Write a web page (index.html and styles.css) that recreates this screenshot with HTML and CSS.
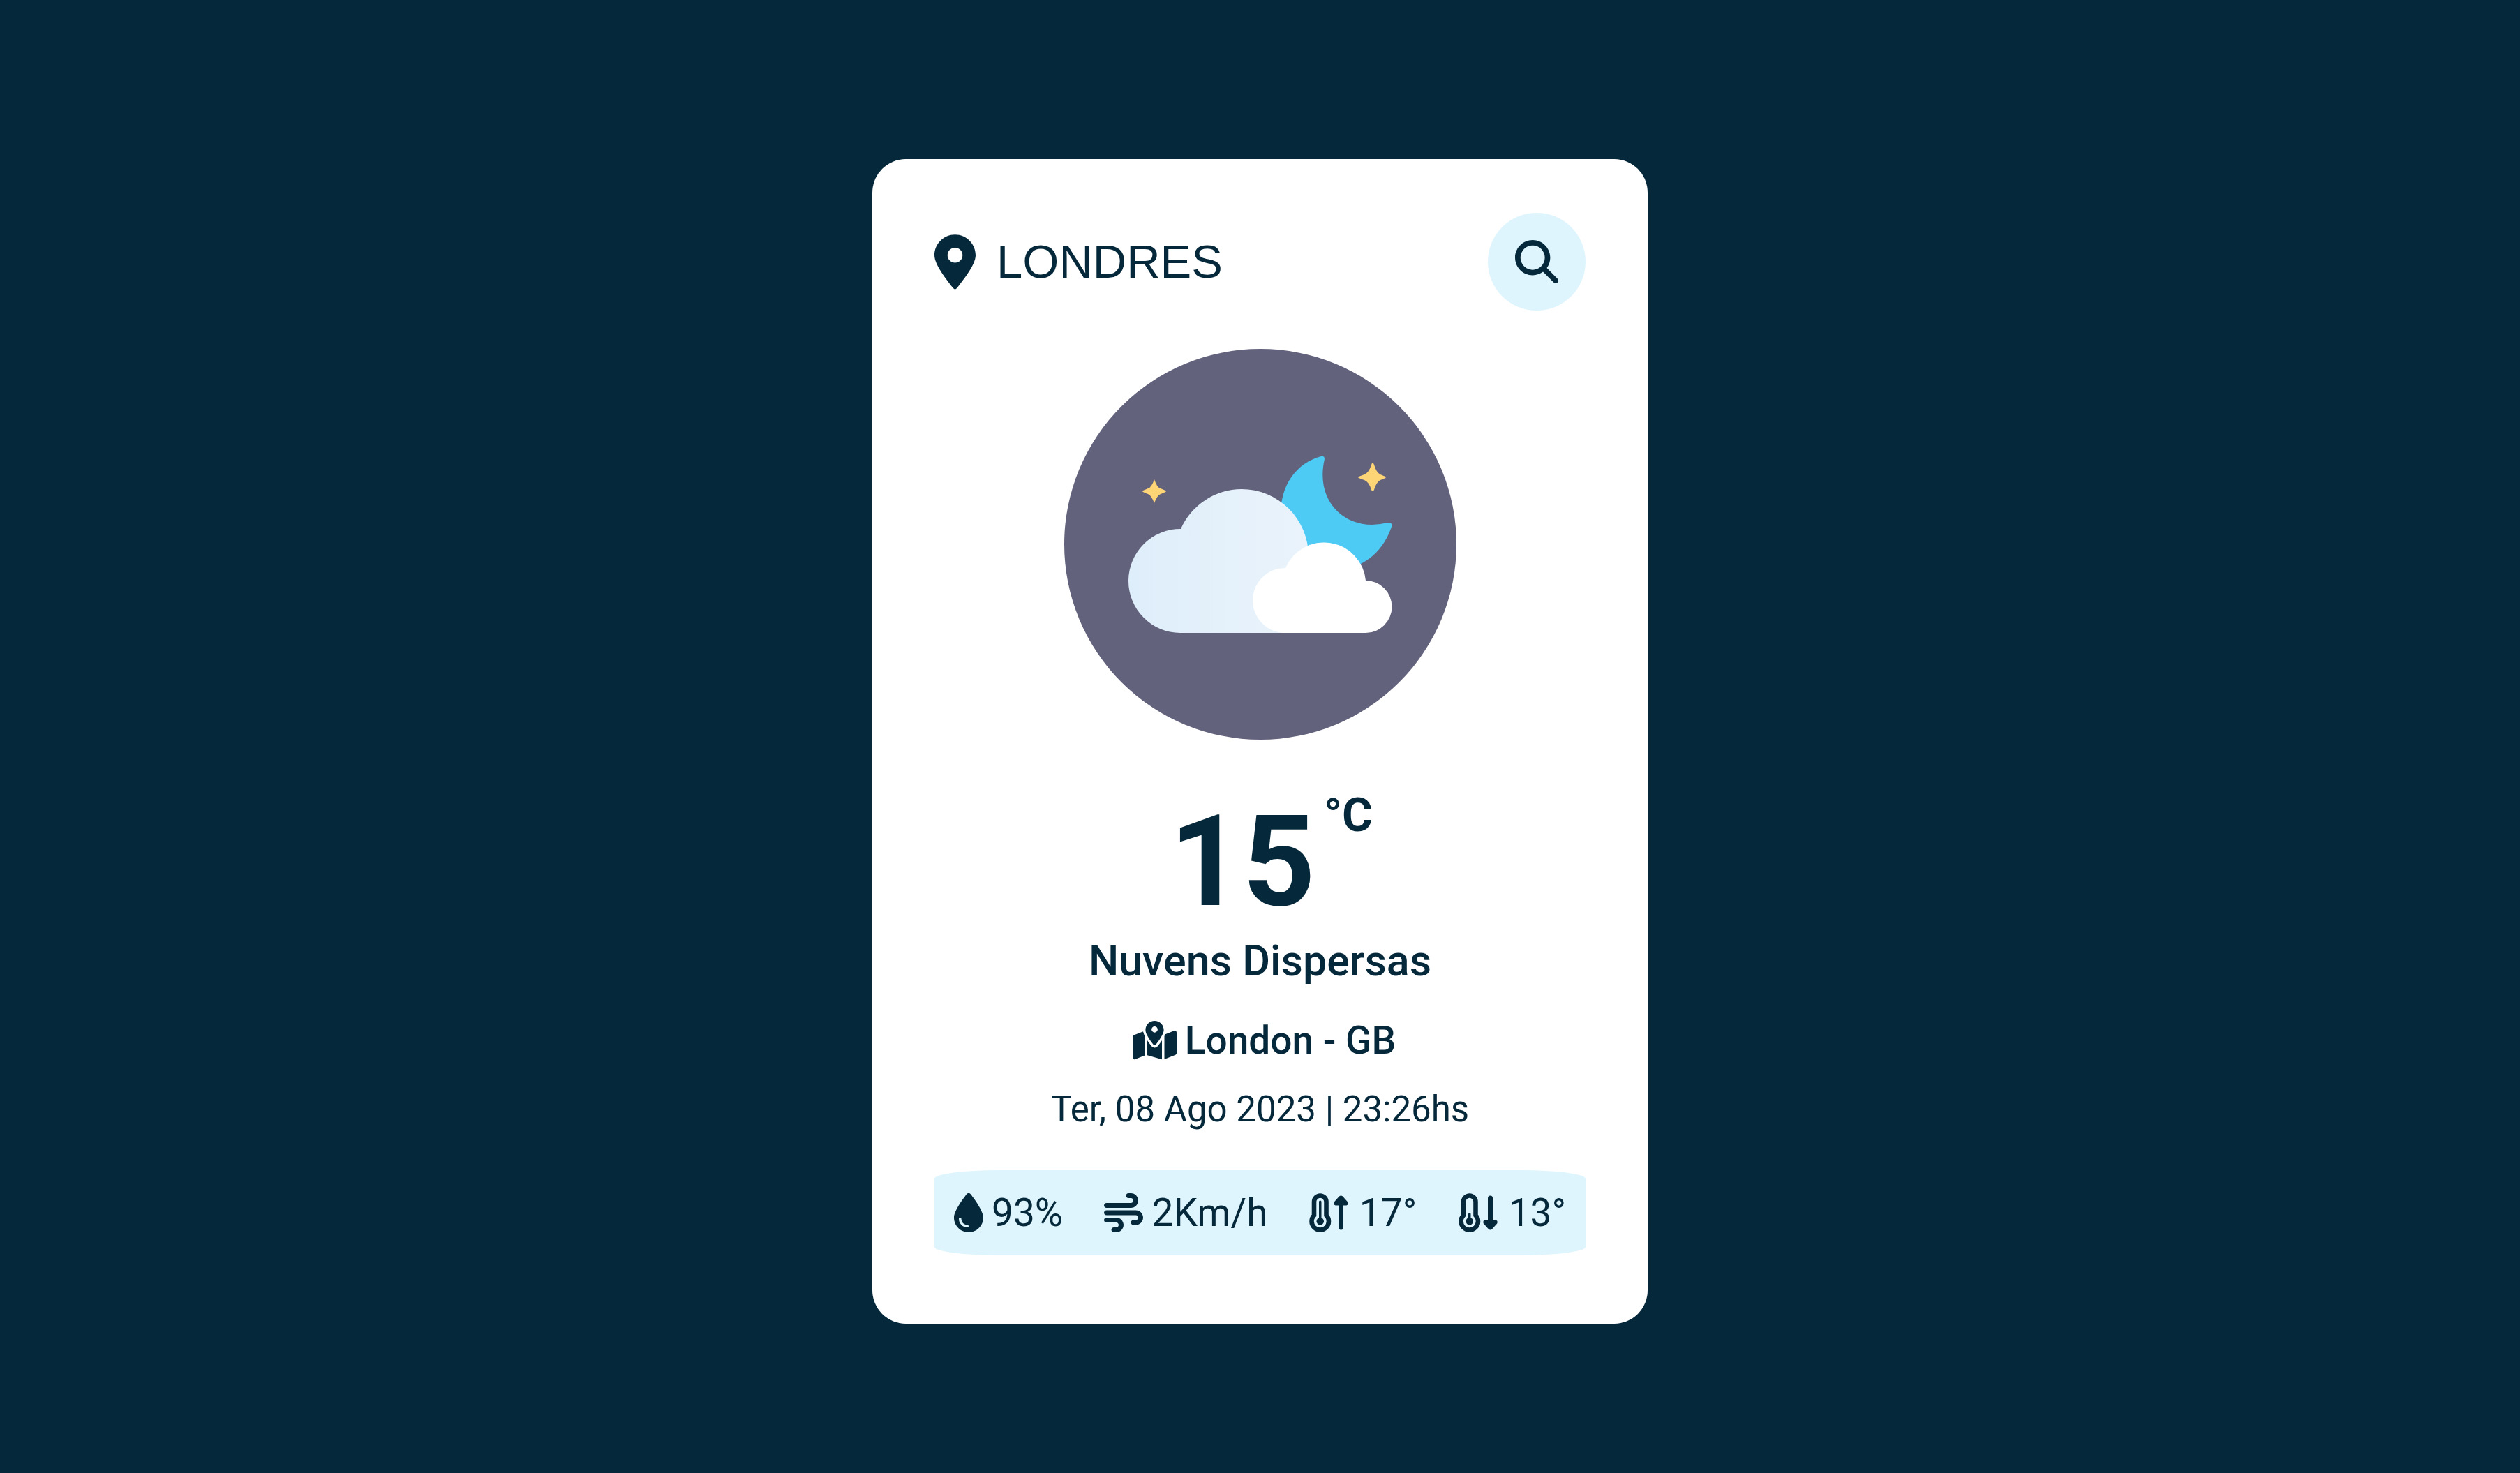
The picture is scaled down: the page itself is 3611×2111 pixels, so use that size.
FILE: index.html
```html
<!DOCTYPE html>
<html lang="pt-BR">
<head>
<meta charset="utf-8">
<title>Clima</title>
<meta name="viewport" content="width=device-width, initial-scale=1">
<link rel="stylesheet" href="styles.css">
</head>
<body>
<main class="card">
  <form class="search">
    <label class="search-label" for="city" aria-label="Cidade">
      <svg class="pin" viewBox="0 0 384 512" aria-hidden="true"><path d="M192 510C184 510 174 500 166 489C110 415 0 280 0 192C0 86 86 0 192 0S384 86 384 192C384 280 274 415 218 489C210 500 200 510 192 510zM192 122a70 70 0 1 0 0 140 70 70 0 1 0 0-140z"/></svg>
    </label>
    <input class="search-input" id="city" type="text" value="LONDRES">
    <button class="search-button" type="button" aria-label="Buscar">
      <svg class="glass" viewBox="0 0 512 512" aria-hidden="true"><path d="M416 208c0 45.900-14.900 88.300-40 122.700L502.600 457.400c12.500 12.500 12.500 32.800 0 45.300s-32.800 12.500-45.300 0L330.700 376c-34.400 25.200-76.800 40-122.700 40C93.100 416 0 322.900 0 208S93.100 0 208 0S416 93.100 416 208zM208 352a144 144 0 1 0 0-288 144 144 0 1 0 0 288z"/></svg>
    </button>
  </form>

  <svg class="picture" viewBox="0 0 562 560" role="img" aria-label="Nuvens à noite">
    <defs>
      <linearGradient id="cloud" x1="0" x2="1" y1="0" y2="0">
        <stop offset="0" stop-color="#deeefa"/>
        <stop offset="1" stop-color="#eaf3fb"/>
      </linearGradient>
    </defs>
    <ellipse cx="281" cy="280" rx="281" ry="280" fill="#63627c"/>
    <path fill="#4dcbf5" d="M368 154Q373 153 373 158C360 214 396 252 441 252Q452 252 463 249Q471 248 469 255C454 299 419 317 386 317C342 317 310 282 310 238C310 195 332 164 368 154Z"/>
    <path fill="#fed576" d="M441 164Q443 163 444 166Q447 177 453 180Q461 183 461 184Q461 185 453 188Q447 191 444 202Q442 206 440 202Q437 191 430 188Q421 185 421 184Q421 183 430 180Q437 177 440 166Z"/>
    <path fill="#fed576" d="M129 187Q133 199 138 200Q146 203 146 204Q146 205 138 208Q133 210 129 221Q125 210 120 208Q112 205 112 204Q112 203 120 200Q125 199 129 187Z"/>
    <path fill="url(#cloud)" d="M166 407H331Q350 407 350 297A96 96 0 0 0 254 201A96 96 0 0 0 167 258A74 74 0 0 0 166 407Z"/>
    <path fill="#fff" d="M316 407H432A37 37 0 0 0 432 332A60 60 0 0 0 317 314A46 46 0 0 0 316 407Z"/>
  </svg>

  <h1 class="temperature">15<sup class="unit">°C</sup></h1>
  <p class="description">Nuvens Dispersas</p>
  <p class="place">
    <svg class="icon icon-wide" viewBox="0 0 576 512" aria-hidden="true"><path d="M408 120c0 54.600-73.100 151.900-105.200 192c-7.700 9.600-22 9.600-29.600 0C241.100 271.900 168 174.600 168 120C168 53.700 221.700 0 288 0s120 53.700 120 120zm8 80.400c3.500-6.900 6.700-13.800 9.600-20.600c.5-1.200 1-2.500 1.500-3.700l116-46.400C558.900 123.400 576 135 576 152V422.800c0 9.800-6 18.600-15.100 22.300L416 503V200.400zM137.600 138.300c2.400 14.100 7.200 28.300 12.800 41.500c2.900 6.800 6.100 13.700 9.600 20.600V451.800L32.900 502.700C17.100 509 0 497.400 0 480.400V209.600c0-9.800 6-18.600 15.100-22.300l122.600-49zM327.800 332c13.900-17.400 35.700-45.700 56.200-77V504.300L192 449.400V255c20.500 31.300 42.300 59.600 56.200 77c20.500 25.600 59.100 25.600 79.600 0zM288 152a40 40 0 1 0 0-80 40 40 0 1 0 0 80z"/></svg>
    <span>London - GB</span>
  </p>
  <p class="date">Ter, 08 Ago 2023 | 23:26hs</p>

  <ul class="details">
    <li class="detail">
      <svg class="icon icon-narrow" viewBox="0 0 384 512" aria-hidden="true"><path d="M192 512C86 512 0 426 0 320C0 228.800 130.200 57.700 166.600 11.700C172.600 4.200 181.500 0 191.100 0h1.800c9.600 0 18.500 4.200 24.500 11.700C253.800 57.700 384 228.800 384 320c0 106-86 192-192 192zM96 336c0-8.800-7.200-16-16-16s-16 7.200-16 16c0 61.900 50.100 112 112 112c8.800 0 16-7.200 16-16s-7.200-16-16-16c-44.200 0-80-35.800-80-80z"/></svg>
      <span>93%</span>
    </li>
    <li class="detail">
      <svg class="icon" viewBox="0 0 512 512" aria-hidden="true"><path d="M288 32c0 17.700 14.300 32 32 32h32c17.700 0 32 14.300 32 32s-14.300 32-32 32H32c-17.700 0-32 14.300-32 32s14.300 32 32 32H352c53 0 96-43 96-96s-43-96-96-96H320c-17.700 0-32 14.300-32 32zm64 352c0 17.700 14.300 32 32 32h32c53 0 96-43 96-96s-43-96-96-96H32c-17.700 0-32 14.300-32 32s14.300 32 32 32H416c17.700 0 32 14.300 32 32s-14.300 32-32 32H384c-17.700 0-32 14.300-32 32zM128 512h32c53 0 96-43 96-96s-43-96-96-96H32c-17.700 0-32 14.300-32 32s14.300 32 32 32H160c17.700 0 32 14.300 32 32s-14.300 32-32 32H128c-17.700 0-32 14.300-32 32s14.300 32 32 32z"/></svg>
      <span>2Km/h</span>
    </li>
    <li class="detail detail-temp">
      <svg class="icon icon-line" viewBox="0 0 512 512" aria-hidden="true"><path stroke-width="60" d="M64 112a80 80 0 0 1 160 0V290A112 112 0 1 1 64 290Z"/><path stroke-width="32" stroke-linecap="round" d="M144 112V368"/><circle cx="144" cy="368" r="48" fill="currentColor" stroke="none"/><path stroke-width="64" stroke-linecap="round" d="M416 120V448"/><path fill="currentColor" stroke="none" d="M393 42Q416 22 439 42L504 114Q520 150 488 160H344Q312 150 328 114Z"/></svg>
      <span>17°</span>
    </li>
    <li class="detail detail-temp">
      <svg class="icon icon-line" viewBox="0 0 512 512" aria-hidden="true"><path stroke-width="60" d="M64 112a80 80 0 0 1 160 0V290A112 112 0 1 1 64 290Z"/><path stroke-width="32" stroke-linecap="round" d="M144 272V368"/><circle cx="144" cy="368" r="48" fill="currentColor" stroke="none"/><path stroke-width="64" stroke-linecap="round" d="M416 64V392"/><path fill="currentColor" stroke="none" d="M393 470Q416 490 439 470L504 398Q520 362 488 352H344Q312 362 328 398Z"/></svg>
      <span>13°</span>
    </li>
  </ul>
</main>
</body>
</html>
```
FILE: styles.css
```css
* {
  margin: 0;
  padding: 0;
  box-sizing: border-box;
}

body {
  min-height: 100vh;
  padding: 14px 14px 0;
  display: flex;
  align-items: center;
  justify-content: center;
  background: #05283b;
  color: #05283b;
  font-family: Roboto, sans-serif;
}

.card {
  width: 100%;
  max-width: 1111px;
  padding: 77px 89px 98px;
  border-radius: 48px;
  background: #fff;
  display: flex;
  flex-direction: column;
  align-items: center;
}

.search {
  align-self: stretch;
  display: flex;
  align-items: center;
}

.search-label {
  display: flex;
}

.search-input {
  flex: 1;
  min-width: 0;
  margin-left: 30px;
  border: 0;
  background: none;
  color: inherit;
  font: 67px/76px "Liberation Sans", sans-serif;
}

.search-button {
  width: 140px;
  height: 140px;
  border: 0;
  border-radius: 50%;
  background: #def5fe;
  color: inherit;
  display: flex;
  align-items: center;
  justify-content: center;
}

svg {
  flex: none;
  fill: currentColor;
}

.pin {
  width: 59px;
  height: 79px;
}

.glass {
  width: 62px;
  height: 62px;
}

.picture {
  width: 562px;
  max-width: 100%;
  margin-top: 55px;
}

.temperature {
  margin-top: 67px;
  padding-left: 32px;
  font-size: 182px;
  font-weight: 700;
  line-height: 216px;
  display: flex;
  align-items: flex-start;
  gap: 12px;
}

.unit {
  font-size: 67px;
  line-height: 82px;
}

.description {
  font-size: 61px;
  font-weight: 500;
  line-height: 68px;
}

.place {
  margin-top: 48px;
  padding-left: 12px;
  font-size: 55px;
  font-weight: 500;
  line-height: 64px;
  display: flex;
  align-items: center;
  gap: 12px;
}

.date {
  margin-top: 38px;
  font-size: 51px;
  line-height: 58px;
}

.details {
  align-self: stretch;
  margin-top: 58px;
  padding: 28px;
  border-radius: 10%;
  background: #def5fe;
  list-style: none;
  display: flex;
  justify-content: space-between;
}

.detail {
  font-size: 55px;
  line-height: 66px;
  display: flex;
  align-items: center;
  gap: 12px;
}

.detail-temp {
  gap: 16px;
}

.icon {
  width: 56px;
  height: 56px;
}

.icon-wide {
  width: 63px;
}

.icon-narrow {
  width: 42px;
}

.icon-line {
  fill: none;
  stroke: currentColor;
}
```
